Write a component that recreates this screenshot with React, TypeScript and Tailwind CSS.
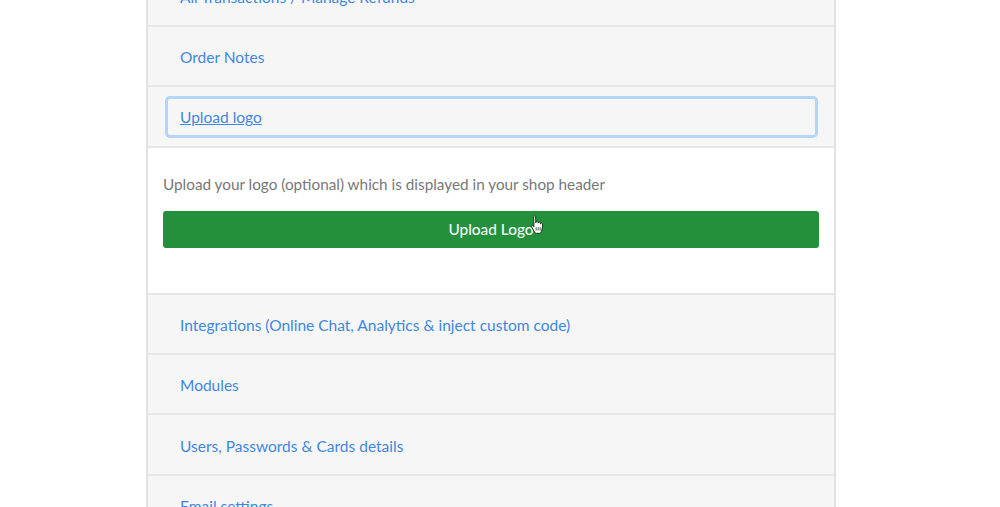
import * as React from "react";

function Row({ label, tall }: { label: string; tall?: boolean }) {
  return (
    <div className={`flex items-center border-b-2 border-[#e6e6e6] bg-[#f6f6f7] pl-[32px] pt-[4px] ${tall ? "h-[61px]" : "h-[60px]"}`}>
      <a className="text-[15.5px] text-[#3f87dd]">{label}</a>
    </div>
  );
}

function HandCursor() {
  return (
    <svg className="absolute left-[367px] top-[4px]" width="15" height="20" viewBox="0 0 13 18">
      <path
        d="M3 1.500C3 .5 4.800.5 4.800 1.500L5 7 5.400 6C5.800 5.300 6.900 5.500 7 6.300L7.100 7.300 7.500 6.600C7.900 6 8.900 6.200 9 7L9.100 8 9.600 7.500C10.200 7 11 7.400 11 8.200 11 10.500 10.800 12.800 10 14.800 9.600 15.900 9 16.500 8 16.500H5.500C4.700 16.500 4.200 16.100 3.800 15.400L1.200 10.800C.6 9.800 1.800 9 2.600 9.800L3.300 10.600Z"
        fill="#ffffff"
        stroke="#16351f"
        strokeWidth="0.9"
      />
      <path d="M5.300 11V14M7.100 11V14M8.900 11V14" stroke="#16351f" strokeWidth="0.7" fill="none" />
    </svg>
  );
}

export default function App() {
  return (
    <div className="h-[507px] w-[1000px] overflow-hidden bg-white font-['Lato','Open_Sans',sans-serif]">
      <div className="ml-[146px] mt-[-33px] w-[690px] border-x-2 border-[#e2e2e2]">
        <Row label="All Transactions / Manage Refunds" />
        <Row label="Order Notes" />
        <div className="flex h-[61px] items-center border-b-2 border-[#e6e6e6] bg-[#f6f6f7] pl-[17px] pr-[16px]">
          <a className="flex h-[42px] w-full items-center rounded-[5px] border-[3px] border-[#b5d5f7] px-[12px] pt-[3px] text-[15.5px] text-[#3f87dd] underline">
            Upload logo
          </a>
        </div>
        <div className="h-[147px] border-b-2 border-[#e6e6e6] bg-white pl-[15px] pt-[26px]">
          <p className="text-[15.3px] leading-[20px] text-[#787878]">
            Upload your logo (optional) which is displayed in your shop header
          </p>
          <div className="relative mt-[17px]">
            <button
              type="button"
              className="flex h-[37px] w-[656px] items-center justify-center rounded-[3px] bg-[#24903c] text-[15.4px] font-medium text-[#f2f7f3]"
            >
              Upload Logo
            </button>
            <HandCursor />
          </div>
        </div>
        <Row label="Integrations (Online Chat, Analytics & inject custom code)" />
        <Row label="Modules" />
        <Row label="Users, Passwords & Cards details" tall />
        <Row label="Email settings" />
      </div>
    </div>
  );
}
